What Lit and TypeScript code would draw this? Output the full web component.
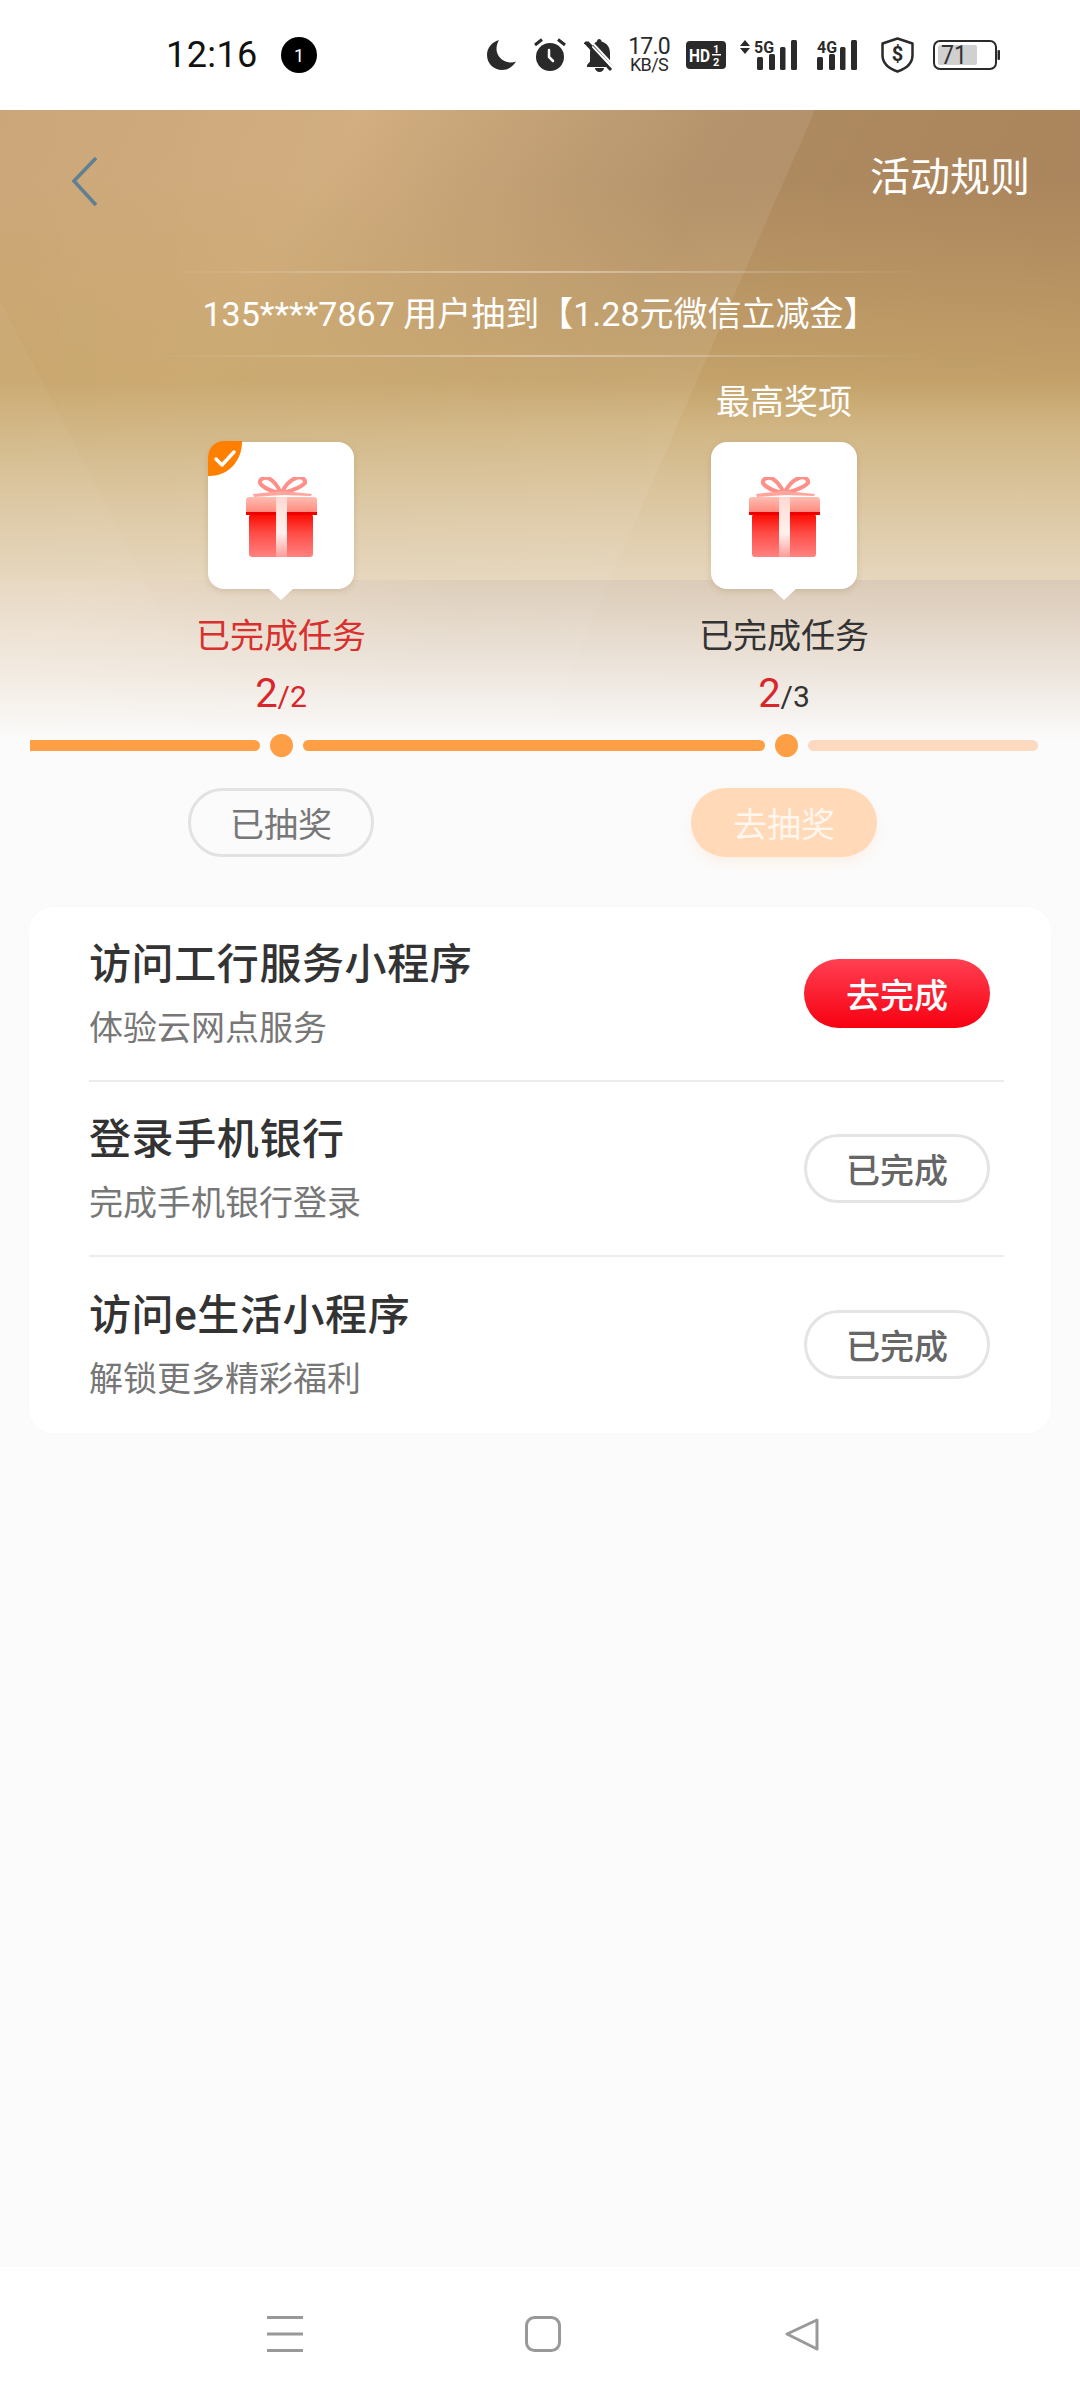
import { LitElement, html, css, svg } from "lit";
import { customElement } from "lit/decorators.js";

const CJK = `Roboto, "Noto Sans CJK SC", "Noto Sans", sans-serif`;

function gift(id: string) {
  return html`<svg class="gift" viewBox="0 0 71 80" width="71" height="80">
    <defs>
      <linearGradient id="lid${id}" x1="0" y1="0" x2="0" y2="1"><stop offset="0" stop-color="#ffbdb2"/><stop offset="1" stop-color="#ff8478"/></linearGradient>
      <linearGradient id="body${id}" x1="0" y1="0" x2="0" y2="1"><stop offset="0" stop-color="#fb0a00"/><stop offset=".45" stop-color="#ff4d48"/><stop offset="1" stop-color="#ff8280"/></linearGradient>
      <linearGradient id="rib${id}" x1="0" y1="0" x2="0" y2="1"><stop offset="0" stop-color="#ffd9d2"/><stop offset=".6" stop-color="#fff1ee"/><stop offset="1" stop-color="#ff9c98"/></linearGradient>
    </defs>
    <path d="M33 16C25 14 16 10 14 6 13 2 18 0 22 1 27 3 32 9 34 15Z" fill="none" stroke="#ff8f88" stroke-width="4"/>
    <path d="M37 16C44 14 55 11 59 6 60 2 55-1 50 1 44 3 39 9 36 15Z" fill="none" stroke="#ff8f88" stroke-width="4"/>
    <path d="M7 17 34 14 37 14 66 17 65 19 36 18 8 20Z" fill="#ffa59c"/>
    <rect x="3" y="37" width="64" height="43" rx="3" fill="url(#body${id})"/>
    <path d="M0 23a3 3 0 0 1 3-3h65a3 3 0 0 1 3 3v14H0Z" fill="url(#lid${id})"/>
    <rect x="0" y="35" width="71" height="3" fill="#ef0000"/>
    <rect x="30" y="20" width="11" height="60" fill="url(#rib${id})"/>
  </svg>`;
}

@customElement("app-root")
export class AppRoot extends LitElement {
  static styles = css`
    :host { display: block; width: 1080px; height: 2400px; background: #fbfbfb; font-family: ${css([CJK] as any as TemplateStringsArray)}; position: relative; overflow: hidden; }
    .page { display: flex; flex-direction: column; height: 2400px; }

    .status { height: 110px; flex: none; background: #fff; display: flex; align-items: center; padding-left: 166px; color: #111; padding-top: 8px; box-sizing: border-box; padding-bottom: 8px; }
    .time { font-size: 36px; width: 115px; letter-spacing: .4px; line-height: 36px; }
    .badge { width: 36px; height: 36px; border-radius: 50%; background: #000; color: #fff; font-size: 18px; display: flex; align-items: center; justify-content: center; }
    .icons { display: flex; align-items: center; margin-left: 170px; color: #2a2a2a; }
    .icons svg { display: block; flex: none; }
    .icons svg text { font-family: Roboto, sans-serif; }
    .m18 { margin-left: 18px; }
    .m13 { margin-left: 13px; }
    .m16 { margin-left: 16px; }
    .m14 { margin-left: 14px; }
    .m17 { margin-left: 17px; }
    .m19 { margin-left: 19px; }
    .speed { width: 42px; display: flex; flex-direction: column; align-items: center; font-size: 23px; line-height: 19px; letter-spacing: -.8px; }
    .speed small { font-size: 18px; line-height: 17px; letter-spacing: -.6px; }

    .hero { position: relative; flex: none; }
    .bg { position: absolute; left: 0; top: 0; width: 1080px; height: 630px; display: block; }
    .content { position: relative; }

    .nav { height: 136px; display: flex; justify-content: space-between; align-items: flex-start; padding: 0 50px 0 72px; color: #fff; font-size: 40px; }
    .nav svg { display: block; margin-top: 46px; }
    .nav span { line-height: 56px; margin-top: 40px; }
    .ticker { height: 86px; margin-top: 25px; width: 1080px; position: relative; display: flex; align-items: center; justify-content: center; color: #fff; font-size: 34px; line-height: 44px; }
    .rule { position: absolute; left: 150px; width: 780px; height: 2px; background: linear-gradient(90deg, rgba(255,255,255,0), rgba(255,255,255,.38) 50%, rgba(255,255,255,0)); }
    .rule.t { top: 0; }
    .rule.b { bottom: 0; }

    .prizes { display: flex; gap: 103px; padding-left: 81px; margin-top: 20px; }
    .prize { width: 400px; display: flex; flex-direction: column; align-items: center; }
    .top { height: 50px; font-size: 34px; line-height: 50px; color: #fff; }
    .box { position: relative; width: 146px; height: 147px; margin-top: 15px; background: #fff; border-radius: 16px; display: flex; justify-content: center; padding-top: 35px; box-sizing: border-box; box-shadow: 0 2px 6px rgba(120,90,40,.18); }
    .box::after { content: ""; position: absolute; left: 60px; bottom: -11px; width: 26px; height: 12px; background: #fff; clip-path: polygon(0 0, 100% 0, 50% 100%); }
    .check { position: absolute; left: 0; top: -1px; width: 34px; height: 35px; display: block; }
    .label { margin-top: 25px; font-size: 34px; line-height: 44px; color: #333; }
    .label.red { color: #d9302f; }
    .count { margin-top: 10px; height: 52px; line-height: 52px; font-size: 30px; color: #333; display: flex; align-items: baseline; }
    .count b { font-weight: 400; font-size: 40px; color: #d8262c; }
    .count.red { color: #d8262c; }

    .progress { display: flex; align-items: center; height: 23px; margin-top: 14px; padding-left: 30px; }
    .bar { height: 11px; background: #ff9f45; border-radius: 0 6px 6px 0; }
    .bar.mid { border-radius: 6px; }
    .bar.light { background: #fcd9bf; border-radius: 6px; }
    .dot { width: 23px; height: 23px; border-radius: 50%; background: #ff9f45; margin: 0 10px; flex: none; }

    .draws { display: flex; gap: 317px; padding-left: 188px; margin-top: 31px; }
    .pill { width: 186px; height: 69px; border-radius: 35px; box-sizing: border-box; display: flex; align-items: center; justify-content: center; font-size: 34px; flex: none; }
    .pill.off { border: 3px solid #e2e2e2; color: #777; background: transparent; }
    .pill.soft { background: #ffd9b8; color: #fff6ee; box-shadow: 0 6px 12px rgba(255,200,150,.18); }
    .pill.go { background: linear-gradient(180deg, #ff4052, #f70011); color: #fff; font-weight: 500; }
    .pill.done { border: 3px solid #e4e4e4; color: #666; background: #fff; font-weight: 500; }

    .card { margin: 50px 29px 0; width: 1022px; height: 526px; background: #fff; border-radius: 24px; box-sizing: border-box; padding: 0 47px 0 60px; box-shadow: 0 0 4px rgba(0,0,0,.015); }
    .row { height: 175px; display: flex; align-items: center; justify-content: space-between; border-bottom: 2px solid #ececec; box-sizing: border-box; padding-right: 14px; }
    .row:last-child { border-bottom: 0; }
    .text { display: flex; flex-direction: column; }
    .title { font-size: 42px; line-height: 56px; font-weight: 500; color: #333; letter-spacing: .6px; }
    .sub { font-size: 34px; line-height: 46px; color: #777; margin-top: 12px; }

    .spacer { flex: 1; }
    .sysnav { flex: none; height: 133px; background: #fff; display: flex; align-items: flex-start; padding: 49px 0 0 267px; box-sizing: border-box; }
    .sysnav svg { display: block; flex: none; }
    .sysnav .c { margin-left: 222px; }
    .sysnav .d { margin-left: 223px; }
  `;

  private signal(label: string, arrows: boolean) {
    const off = arrows ? 17 : 0;
    return svg`<svg class="${arrows ? "m14" : "m17"}" width="${arrows ? 60 : 46}" height="32" viewBox="0 0 ${arrows ? 60 : 46} 32" fill="currentColor">
      ${arrows ? svg`<path d="M5 1 10 7H0ZM5 15 0 9H10Z"/>` : ""}
      <text x="${arrows ? 14 : 0}" y="14" font-size="17" font-weight="700" textLength="${arrows ? 20 : 20}" lengthAdjust="spacingAndGlyphs">${label}</text>
      <rect x="${off + 0}" y="18" width="6" height="13" rx="1.5"/>
      <rect x="${off + 12}" y="15" width="6" height="16" rx="1.5"/>
      <rect x="${off + 23}" y="8" width="5.5" height="23" rx="1.5"/>
      <rect x="${off + 34 - 0}" y="1" width="6" height="30" rx="1.5" transform="translate(-0 0)"/>
    </svg>`;
  }

  private row(title: string, sub: string, action: string, go: boolean) {
    return html`<div class="row">
      <div class="text"><div class="title">${title}</div><div class="sub">${sub}</div></div>
      <div class="pill ${go ? "go" : "done"}">${action}</div>
    </div>`;
  }

  render() {
    return html`<div class="page">
      <div class="status">
        <span class="time">12:16</span>
        <span class="badge">1</span>
        <div class="icons">
          <svg width="29" height="30" viewBox="0 0 29 30" fill="currentColor"><path d="M12 0C4.800 2 0 8 0 15c0 8.500 6.800 15 15 15 6 0 11-3.400 14-8.500-1.600.6-3.200 1-5 1C15.500 22.500 9.500 16 9.500 9c0-3.300 1-6.400 2.500-9Z"/></svg>
          <svg class="m18" width="32" height="34" viewBox="0 0 32 34" fill="currentColor">
            <circle cx="16" cy="19" r="14"/>
            <path d="M1 7 8 1.500M31 7 24 1.500" stroke="currentColor" stroke-width="3" fill="none"/>
            <path d="M15 12v7l4 4" stroke="#fff" stroke-width="2.500" fill="none" stroke-linecap="round"/>
          </svg>
          <svg class="m18" width="31" height="33" viewBox="0 0 31 33" fill="currentColor">
            <path d="M15 0c1.500 0 2.500 1 2.500 2.500C23 4 26 8.500 26 14v8l4 4H3l3-3.500V14c0-2 .3-3.500 1-5L24 26 28 26 4 2 2 4l22 24H3v-2l4-4V13c0-5 3-9.400 6-10.500C13 1 14 0 15 0Z"/>
            <path d="M1 3 27 31" stroke="currentColor" stroke-width="3"/>
            <path d="M1 0 29 30" stroke="#fff" stroke-width="2" transform="translate(3 -1)"/>
            <path d="M11 29h9a4.500 4 0 0 1-9 0Z"/>
          </svg>
          <div class="speed m13"><span>17.0</span><small>KB/S</small></div>
          <svg class="m16" width="40" height="28" viewBox="0 0 40 28">
            <rect width="40" height="28" rx="4" fill="#2a2a2a"/>
            <text x="3" y="21" font-size="18" font-weight="700" fill="#fff" textLength="21" lengthAdjust="spacingAndGlyphs">HD</text>
            <text x="27" y="12" font-size="11" font-weight="700" fill="#fff">1</text>
            <rect x="26" y="13" width="9" height="1.500" fill="#fff"/>
            <text x="27" y="25" font-size="11" font-weight="700" fill="#fff">2</text>
          </svg>
          ${this.signal("5G", true)}
          ${this.signal("4G", false)}
          <svg class="m18" width="33" height="36" viewBox="0 0 33 36">
            <path d="M16.500 1.500 31.500 6.500V18c0 8-6 13.500-15 16.500C7.500 31.500 1.500 26 1.500 18V6.500Z" fill="none" stroke="#2a2a2a" stroke-width="2.500" stroke-linejoin="round"/>
            <text x="16.500" y="24" font-size="20" font-weight="700" fill="#2a2a2a" text-anchor="middle">$</text>
          </svg>
          <svg class="m19" width="67" height="30" viewBox="0 0 67 30">
            <rect x="1" y="1" width="62" height="28" rx="6" fill="#fff" stroke="#2a2a2a" stroke-width="2"/>
            <rect x="5" y="5" width="39" height="20" rx="2" fill="#d0d0d0"/>
            <text x="21" y="24" font-size="25" fill="#333" text-anchor="middle" textLength="26" lengthAdjust="spacingAndGlyphs">71</text>
            <rect x="64.500" y="10" width="2.500" height="10" rx="1" fill="#2a2a2a"/>
          </svg>
        </div>
      </div>

      <div class="hero">
        <svg class="bg" viewBox="0 0 1080 630" preserveAspectRatio="none">
          <defs>
            <linearGradient id="base" x1="0" y1="0" x2="1" y2=".35">
              <stop offset="0" stop-color="#cba679"/><stop offset=".3" stop-color="#d0ab7b"/><stop offset=".62" stop-color="#ae8a60"/><stop offset="1" stop-color="#aa845c"/>
            </linearGradient>
            <linearGradient id="low" x1="0" y1="0" x2="0" y2="1">
              <stop offset="0" stop-color="#c8a56a" stop-opacity="0"/><stop offset=".62" stop-color="#c9a86c" stop-opacity="1"/><stop offset="1" stop-color="#c9a86c" stop-opacity="1"/>
            </linearGradient>
            <linearGradient id="fade" x1="0" y1="0" x2="0" y2="1">
              <stop offset="0" stop-color="#fbfbfb" stop-opacity="0"/><stop offset=".5" stop-color="#f3ece3" stop-opacity=".62"/><stop offset="1" stop-color="#fbfbfb" stop-opacity="1"/>
            </linearGradient>
            <linearGradient id="facet" x1="0" y1="0" x2="1" y2="0">
              <stop offset="0" stop-color="#ffffff" stop-opacity="0"/><stop offset="1" stop-color="#ffffff" stop-opacity=".08"/>
            </linearGradient>
          </defs>
          <rect width="1080" height="630" fill="url(#base)"/>
          <rect y="70" width="1080" height="400" fill="url(#low)"/>
          <path d="M815 0 540 630H0V0Z" fill="url(#facet)"/>
          <path d="M0 190 190 560H0Z" fill="#fff" opacity=".04"/>
          <rect y="270" width="1080" height="360" fill="url(#fade)"/>
        </svg>
        <div class="content">
          <div class="nav">
            <svg width="27" height="51" viewBox="0 0 27 51"><path d="M24 2 2 25 24 49" fill="none" stroke="#5f7f92" stroke-width="3.500"/></svg>
            <span>活动规则</span>
          </div>
          <div class="ticker">
            <i class="rule t"></i><span>135****7867 用户抽到【1.28元微信立减金】</span><i class="rule b"></i>
          </div>
          <div class="prizes">
            <div class="prize">
              <div class="top"></div>
              <div class="box">
                <svg class="check" viewBox="0 0 34 35">
                  <path d="M16 0H34V1C34 20 20 35 2 35H0V16C0 7 7 0 16 0Z" fill="#ff8000"/>
                  <path d="M8 18 14 24 26 11" fill="none" stroke="#fff" stroke-width="3.500" stroke-linecap="round" stroke-linejoin="round"/>
                </svg>
                ${gift("a")}
              </div>
              <div class="label red">已完成任务</div>
              <div class="count red"><b>2</b>/2</div>
            </div>
            <div class="prize">
              <div class="top">最高奖项</div>
              <div class="box">${gift("b")}</div>
              <div class="label">已完成任务</div>
              <div class="count"><b>2</b>/3</div>
            </div>
          </div>
          <div class="progress">
            <div class="bar" style="width:230px"></div>
            <div class="dot"></div>
            <div class="bar mid" style="width:462px"></div>
            <div class="dot"></div>
            <div class="bar light" style="width:230px"></div>
          </div>
          <div class="draws">
            <div class="pill off">已抽奖</div>
            <div class="pill soft">去抽奖</div>
          </div>
        </div>
      </div>

      <div class="card">
        ${this.row("访问工行服务小程序", "体验云网点服务", "去完成", true)}
        ${this.row("登录手机银行", "完成手机银行登录", "已完成", false)}
        ${this.row("访问e生活小程序", "解锁更多精彩福利", "已完成", false)}
      </div>

      <div class="spacer"></div>
      <div class="sysnav">
        <svg width="36" height="36" viewBox="0 0 36 36" fill="#999"><rect y="0" width="36" height="3"/><rect y="16.500" width="36" height="3"/><rect y="33" width="36" height="3"/></svg>
        <svg class="c" width="36" height="36" viewBox="0 0 36 36"><rect x="1.500" y="1.500" width="33" height="33" rx="8" fill="none" stroke="#999" stroke-width="3"/></svg>
        <svg class="d" width="36" height="36" viewBox="0 0 36 36"><path d="M33 4 3 18 33 33Z" transform="translate(0 0)" fill="none" stroke="#999" stroke-width="3" stroke-linejoin="round"/></svg>
      </div>
    </div>`;
  }
}
